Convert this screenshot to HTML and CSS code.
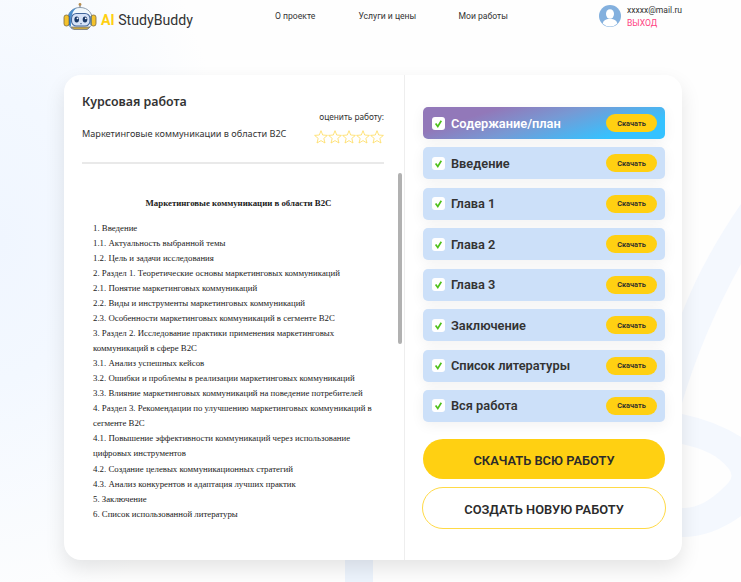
FILE: index.html
```
<!DOCTYPE html>
<html lang="ru">
<head>
<meta charset="utf-8">
<title>AI StudyBuddy</title>
<link rel="stylesheet" href="styles.css">
</head>
<body>
<svg class="backdrop" viewBox="0 0 741 582" aria-hidden="true">
  <path d="M345 550h28v40h-28z" fill="#edf4fd"/>
  <path d="M741 204Q703 259 682 313L670 345V440L682 403Q703 332 741 264Z" fill="#f4f8fe"/>
  <path fill-rule="evenodd" d="M670 411L682 414Q716 421 741 437V516Q712 537 682 537H670ZM670 443V508H684C703 508 720 492 729 482Q734 476 729 469C718 455 704 449 682 444Z" fill="#f4f8fe"/>
</svg>
<header class="header">
  <a class="brand">
    <svg class="robot" viewBox="0 0 34 30">
      <path d="M17 3v4" stroke="#5c6472" stroke-width="1"/>
      <circle cx="17" cy="2.400" r="1.400" fill="#b88d4c"/>
      <path d="M4.500 22C3.500 11 9 5.500 17 5.500S30.500 11 29.500 22l-4.500 5H9z" fill="#f1f8fc" stroke="#8495a8" stroke-width=".9"/>
      <path d="M4.500 22C3.500 12 8 7 14 5.800 9 9 8 14 8 25z" fill="#4a8dcc"/>
      <rect x="1" y="13" width="5" height="11" rx="2.300" fill="#f4c22c" stroke="#7c6a3c" stroke-width=".8"/>
      <rect x="28" y="13" width="5" height="11" rx="2.300" fill="#f4c22c" stroke="#7c6a3c" stroke-width=".8"/>
      <path d="M6.500 14v9M28 14v9" stroke="#396eaa" stroke-width="1"/>
      <rect x="8.500" y="11.500" width="18.500" height="12.500" rx="5" fill="#d5e2f7" stroke="#41669b" stroke-width="1.100"/>
      <ellipse cx="13.700" cy="17.500" rx="2.300" ry="3" fill="#193866"/>
      <ellipse cx="22" cy="17.500" rx="2.300" ry="3" fill="#193866"/>
      <circle cx="14.500" cy="16.300" r=".9" fill="#fff"/><circle cx="22.800" cy="16.300" r=".9" fill="#fff"/>
      <path d="M17 21.500q1 .8 2 0" stroke="#31507c" stroke-width=".7" fill="none"/>
      <path d="M8 25h19l-3 2.500H11z" fill="#c9a53f" stroke="#6c7482" stroke-width=".7"/>
    </svg>
    <span class="brand-name"><b>AI</b> StudyBuddy</span>
  </a>
  <nav class="nav">
    <a class="nav-about">О проекте</a><a class="nav-prices">Услуги и цены</a><a class="nav-works">Мои работы</a>
  </nav>
  <div class="user">
    <svg class="avatar" viewBox="0 0 22 22">
      <circle cx="11" cy="11" r="11" fill="#83b0de"/>
      <ellipse cx="11" cy="9" rx="4" ry="4.800" fill="#fff"/>
      <path d="M3.600 18.500c1-3 3-4 5.200-4.500h4.400c2.200.5 4.200 1.500 5.200 4.500A10.500 10.500 0 0 1 3.600 18.500z" fill="#fff"/>
    </svg>
    <div class="account"><span>xxxxx@mail.ru</span><a class="logout">ВЫХОД</a></div>
  </div>
</header>
<main class="card">
  <section class="document">
    <h1 class="title">Курсовая работа</h1>
    <div class="summary">
      <p class="topic">Маркетинговые коммуникации в области B2C</p>
      <div class="rating">
        <span>оценить работу:</span>
        <svg class="stars" viewBox="0 0 70 14">
          <defs><path id="star" d="M7 .7l1.700 4.300 4.700.4-3.600 3 1.200 4.600L7 10.600 3 13l1.200-4.600-3.600-3 4.700-.4z"/></defs>
          <use href="#star"/><use href="#star" x="14"/><use href="#star" x="28"/><use href="#star" x="42"/><use href="#star" x="56"/>
        </svg>
      </div>
    </div>
    <div class="viewer">
      <h2 class="doc-title">Маркетинговые коммуникации в области B2C</h2>
      <div class="outline">
        <p>1. Введение</p>
        <p>1.1. Актуальность выбранной темы</p>
        <p>1.2. Цель и задачи исследования</p>
        <p>2. Раздел 1. Теоретические основы маркетинговых коммуникаций</p>
        <p>2.1. Понятие маркетинговых коммуникаций</p>
        <p>2.2. Виды и инструменты маркетинговых коммуникаций</p>
        <p>2.3. Особенности маркетинговых коммуникаций в сегменте B2C</p>
        <p>3. Раздел 2. Исследование практики применения маркетинговых<br>коммуникаций в сфере B2C</p>
        <p>3.1. Анализ успешных кейсов</p>
        <p>3.2. Ошибки и проблемы в реализации маркетинговых коммуникаций</p>
        <p>3.3. Влияние маркетинговых коммуникаций на поведение потребителей</p>
        <p>4. Раздел 3. Рекомендации по улучшению маркетинговых коммуникаций в<br>сегменте B2C</p>
        <p>4.1. Повышение эффективности коммуникаций через использование<br>цифровых инструментов</p>
        <p>4.2. Создание целевых коммуникационных стратегий</p>
        <p>4.3. Анализ конкурентов и адаптация лучших практик</p>
        <p>5. Заключение</p>
        <p>6. Список использованной литературы</p>
      </div>
      <div class="scrollbar"></div>
    </div>
  </section>
  <aside class="sections">
    <svg width="0" height="0" class="sprite"><symbol id="check" viewBox="0 0 13 13"><path d="M3.600 6.400l2.200 3 3.500-5.600" fill="none" stroke="#4fc01c" stroke-width="1.700"/></symbol></svg>
    <div class="item active"><svg class="check"><use href="#check"/></svg><span class="label">Содержание/план</span><button class="get">Скачать</button></div>
    <div class="item"><svg class="check"><use href="#check"/></svg><span class="label">Введение</span><button class="get">Скачать</button></div>
    <div class="item"><svg class="check"><use href="#check"/></svg><span class="label">Глава 1</span><button class="get">Скачать</button></div>
    <div class="item"><svg class="check"><use href="#check"/></svg><span class="label">Глава 2</span><button class="get">Скачать</button></div>
    <div class="item"><svg class="check"><use href="#check"/></svg><span class="label">Глава 3</span><button class="get">Скачать</button></div>
    <div class="item"><svg class="check"><use href="#check"/></svg><span class="label">Заключение</span><button class="get">Скачать</button></div>
    <div class="item"><svg class="check"><use href="#check"/></svg><span class="label">Список литературы</span><button class="get">Скачать</button></div>
    <div class="item"><svg class="check"><use href="#check"/></svg><span class="label">Вся работа</span><button class="get">Скачать</button></div>
    <button class="action primary">СКАЧАТЬ ВСЮ РАБОТУ</button>
    <button class="action outline-btn">СОЗДАТЬ НОВУЮ РАБОТУ</button>
  </aside>
</main>
</body>
</html>
```
FILE: styles.css
```
* { box-sizing: border-box; }
html, body { height: 582px; overflow: hidden; }
body {
  margin: 0;
  color: #333;
  font-family: Roboto, "Liberation Sans", sans-serif;
  background:
    radial-gradient(ellipse 230px 400px at 0 240px, #f0f6ff 0, #f3f8ff 35%, rgba(253, 254, 255, 0) 100%),
    #fefefe;
}
h1, h2, p { margin: 0; }
button { padding: 0; border: 0; font-family: inherit; color: #2b2b2b; }
.backdrop { position: absolute; inset: 0; width: 741px; height: 582px; }
.header { position: relative; display: flex; height: 75px; padding-left: 63px; align-items: flex-start; }
.brand { display: flex; width: 212px; }
.robot { width: 34px; height: 30px; margin-top: 2px; }
.brand-name { margin: 12px 0 0 4px; font-size: 14.150px; line-height: 17px; white-space: nowrap; }
.brand-name b { color: #ffd012; }
.nav { display: flex; width: 324px; margin-top: 10px; font-size: 8.600px; line-height: 12px; white-space: nowrap; }
.nav-about { width: 83.500px; }
.nav-prices { width: 100px; }
.user { display: flex; gap: 6px; }
.avatar { width: 22px; height: 22px; margin-top: 5px; }
.account { display: flex; flex-direction: column; font-size: 8.550px; line-height: 12.500px; padding-top: 4px; }
.logout { color: #ff4081; }
.card {
  position: relative;
  display: flex;
  width: 618px;
  height: 485px;
  margin-left: 64px;
  border-radius: 17px;
  background: #fff;
  box-shadow: 0 9px 20px rgba(0, 0, 0, .1);
}
.document { width: 341px; padding: 18px 0 0 18px; border-right: 1px solid #eee; }
.title { font: 600 12.400px/18px "Noto Sans", sans-serif; }
.summary { display: flex; justify-content: space-between; width: 302px; height: 53px; border-bottom: 2px solid #e9e9e9; white-space: nowrap; }
.topic { margin-top: 16px; font: 9.150px/13px "Noto Sans", sans-serif; }
.rating { display: flex; flex-direction: column; align-items: flex-end; font: 8.250px/12px "Noto Sans", sans-serif; }
.stars { width: 70px; height: 14px; margin-top: 7px; fill: none; stroke: #ffdc5d; stroke-width: .8; }
.viewer { position: relative; height: 380px; padding-top: 32px; color: #222; font-family: "Liberation Serif", serif; }
.doc-title { width: 313px; font-size: 8.800px; line-height: 14px; text-align: center; white-space: nowrap; }
.outline { margin: 11px 0 0 11px; font-size: 8.810px; line-height: 15.030px; white-space: nowrap; }
.scrollbar { position: absolute; top: 9px; right: 2px; width: 4px; height: 171px; border-radius: 2px; background: #b1b1b1; }
.sections { display: flex; flex-direction: column; width: 277px; padding: 32px 17px 0 18px; }
.sprite { position: absolute; }
.item {
  display: flex;
  align-items: center;
  height: 32px;
  margin-bottom: 8.430px;
  padding: 0 8px;
  border-radius: 5px;
  background: #cce0f9;
  box-shadow: 0 3px 14px rgba(0, 0, 0, .06);
}
.active { color: #fff; background: linear-gradient(162deg, #9278b9 23%, #7799d4 48%, #35c2ff 82%); }
.check { width: 13px; height: 13px; margin-left: 1px; border-radius: 3px; background: #fff; }
.label { flex: 1; margin-left: 6px; font-size: 12.800px; font-weight: 600; white-space: nowrap; }
.get { width: 51px; height: 18px; border-radius: 9px; background: #ffd012; font-size: 7.400px; font-weight: 600; }
.action { height: 40px; border-radius: 20px; font-size: 12.850px; font-weight: 600; }
.primary { margin-top: 9px; padding-top: 2px; background: #ffd012; }
.outline-btn { height: 42px; margin: 8px -1px 0; padding-top: 2px; border: 1px solid #ffda46; border-radius: 21px; background: #fff; }
```
